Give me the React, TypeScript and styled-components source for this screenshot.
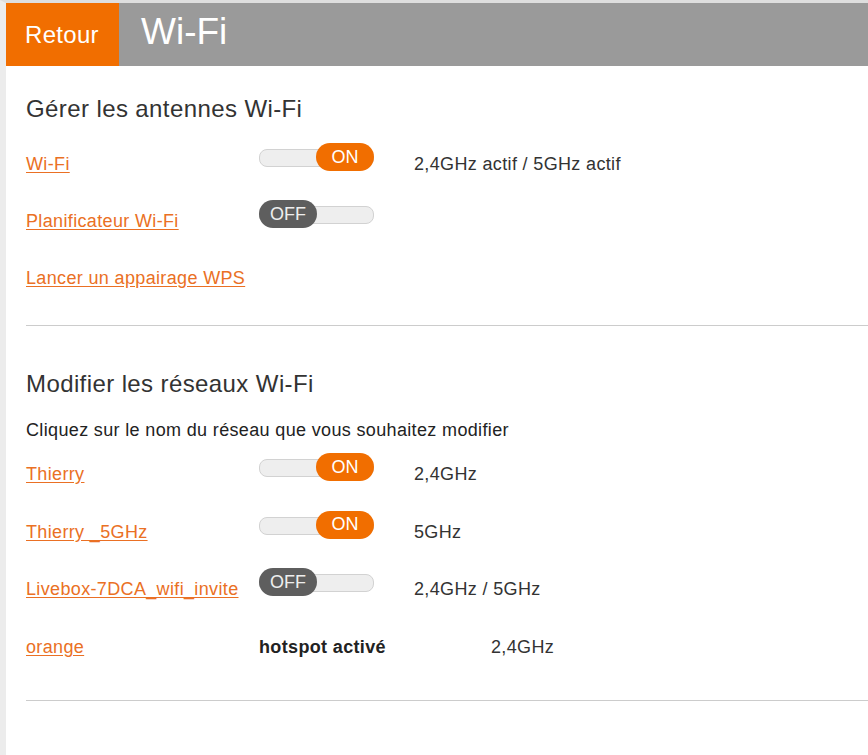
import React from "react";
import styled, { createGlobalStyle } from "styled-components";

const GlobalStyle = createGlobalStyle`
  html, body {
    margin: 0;
    padding: 0;
    background: #ffffff;
  }
  body {
    font-family: "Liberation Sans", Arial, Helvetica, sans-serif;
    color: #333333;
  }
  * { box-sizing: border-box; }
`;

const Page = styled.div`
  min-height: 755px;
  border-top: 3px solid #dedede;
  border-left: 6px solid #ececec;
  background: #ffffff;
`;

const Header = styled.header`
  display: flex;
  align-items: stretch;
  height: 63px;
  background: #9a9a9a;
`;

const BackButton = styled.a`
  display: flex;
  align-items: center;
  width: 113px;
  padding-left: 19px;
  padding-top: 1px;
  background: #f16e00;
  color: #ffffff;
  font-size: 24px;
  letter-spacing: 0.3px;
  text-decoration: none;
  cursor: pointer;
`;

const Title = styled.h1`
  display: flex;
  align-items: center;
  margin: 0 0 0 22px;
  padding-bottom: 5px;
  color: #ffffff;
  font-size: 37px;
  font-weight: normal;
  letter-spacing: 0;
`;

const Content = styled.main`
  padding-left: 20px;
`;

const Section = styled.section<{ $top: number; $bottom: number }>`
  padding-top: ${(p) => p.$top}px;
  padding-bottom: ${(p) => p.$bottom}px;
  border-bottom: 1px solid #cccccc;
`;

const Heading = styled.h2<{ $gap: number }>`
  margin: 0 0 ${(p) => p.$gap}px 0;
  height: 30px;
  line-height: 30px;
  font-size: 24px;
  font-weight: normal;
  letter-spacing: 0.4px;
  color: #333333;
`;

const Intro = styled.p`
  margin: 0 0 1px 0;
  height: 26px;
  line-height: 26px;
  font-size: 18px;
  letter-spacing: 0.35px;
  color: #222222;
`;

const Row = styled.div<{ $h: number }>`
  display: grid;
  grid-template-columns: 233px 155px auto;
  align-items: center;
  height: ${(p) => p.$h}px;
  padding-top: 4px;
  font-size: 18px;
  letter-spacing: 0.35px;
`;

const NameLink = styled.a`
  color: #ea7024;
  text-decoration: underline;
  text-underline-offset: 2px;
  cursor: pointer;
  white-space: nowrap;
`;

const Info = styled.span<{ $indent?: number }>`
  color: #333333;
  white-space: nowrap;
  margin-left: ${(p) => p.$indent ?? 0}px;
`;

const Strong = styled.span`
  font-weight: bold;
  color: #222222;
  white-space: nowrap;
`;

const Switch = styled.div<{ $on: boolean }>`
  position: relative;
  display: flex;
  justify-content: ${(p) => (p.$on ? "flex-end" : "flex-start")};
  width: 115px;
  height: 28px;
  margin-bottom: 15px;
  &::before {
    content: "";
    position: absolute;
    left: 0;
    right: 0;
    top: 6px;
    height: 16px;
    border-radius: 8px;
    background: #eeeeee;
    border: 1px solid #d2d2d2;
  }
`;

const Knob = styled.span<{ $on: boolean }>`
  position: relative;
  display: flex;
  align-items: center;
  justify-content: center;
  width: 58px;
  height: 28px;
  border-radius: 14px;
  background: ${(p) => (p.$on ? "#f16e00" : "#5e5e5e")};
  color: ${(p) => (p.$on ? "#ffffff" : "#eeeeee")};
  font-size: 18px;
  letter-spacing: 0;
`;

const Toggle = ({ on }: { on: boolean }) => (
  <Switch $on={on}>
    <Knob $on={on}>{on ? "ON" : "OFF"}</Knob>
  </Switch>
);

type Net = { name: string; on: boolean; band: string };

const networks: Net[] = [
  { name: "Thierry", on: true, band: "2,4GHz" },
  { name: "Thierry _5GHz", on: true, band: "5GHz" },
  { name: "Livebox-7DCA_wifi_invite", on: false, band: "2,4GHz / 5GHz" },
];

export default function App() {
  return (
    <>
      <GlobalStyle />
      <Page>
        <Header>
          <BackButton>Retour</BackButton>
          <Title>Wi-Fi</Title>
        </Header>
        <Content>
          <Section $top={28} $bottom={20}>
            <Heading $gap={10}>Gérer les antennes Wi-Fi</Heading>
            <Row $h={57}>
              <NameLink>Wi-Fi</NameLink>
              <Toggle on={true} />
              <Info>2,4GHz actif / 5GHz actif</Info>
            </Row>
            <Row $h={57}>
              <NameLink>Planificateur Wi-Fi</NameLink>
              <Toggle on={false} />
              <span />
            </Row>
            <Row $h={57}>
              <NameLink>Lancer un appairage WPS</NameLink>
              <span />
              <span />
            </Row>
          </Section>
          <Section $top={43} $bottom={26}>
            <Heading $gap={18}>Modifier les réseaux Wi-Fi</Heading>
            <Intro>Cliquez sur le nom du réseau que vous souhaitez modifier</Intro>
            {networks.map((n) => (
              <Row $h={57.5} key={n.name}>
                <NameLink>{n.name}</NameLink>
                <Toggle on={n.on} />
                <Info>{n.band}</Info>
              </Row>
            ))}
            <Row $h={57.5}>
              <NameLink>orange</NameLink>
              <Strong>hotspot activé</Strong>
              <Info $indent={77}>2,4GHz</Info>
            </Row>
          </Section>
        </Content>
      </Page>
    </>
  );
}
